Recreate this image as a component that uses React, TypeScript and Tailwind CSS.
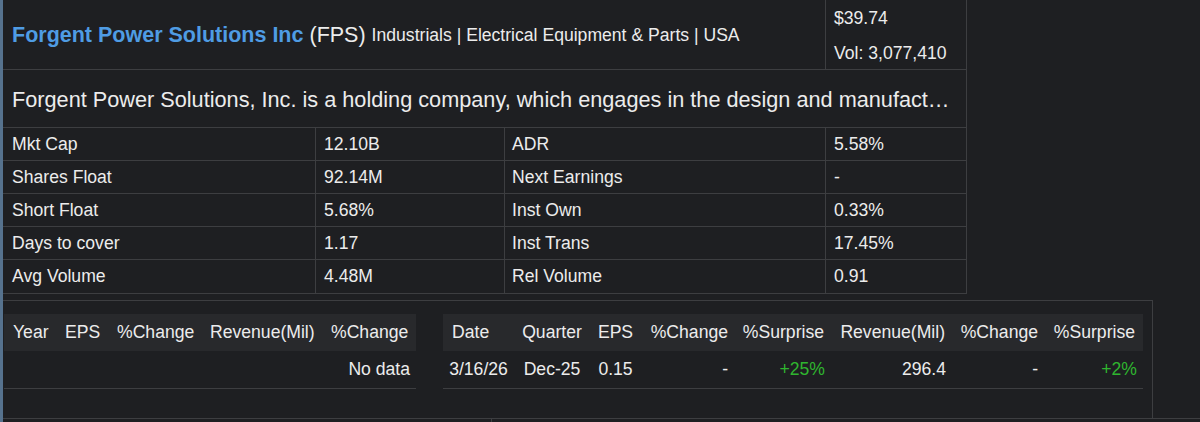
import React from "react";

const rows: [string, string, string, string][] = [
  ["Mkt Cap", "12.10B", "ADR", "5.58%"],
  ["Shares Float", "92.14M", "Next Earnings", "-"],
  ["Short Float", "5.68%", "Inst Own", "0.33%"],
  ["Days to cover", "1.17", "Inst Trans", "17.45%"],
  ["Avg Volume", "4.48M", "Rel Volume", "0.91"],
];

export default function App() {
  return (
    <div className="w-[1200px] h-[422px] overflow-hidden bg-[#1e1f22] text-[#ececec] flex font-['Liberation_Sans',Arial,sans-serif]">
      <div className="w-[3px] shrink-0 bg-[#56728e]" />
      <div className="flex-1 flex flex-col">
        {/* top table */}
        <div className="w-[964px] border-r border-b border-[#3d3e41]">
          <div className="flex h-[70px] border-b border-[#3d3e41]">
            <div className="w-[823px] border-r border-[#3d3e41] flex items-center pl-[9px] pt-[1px] whitespace-nowrap">
              <span className="text-[21.5px] font-bold text-[#4f9ce4]">Forgent Power Solutions Inc</span>
              <span className="text-[21.5px] ml-[6px]">(FPS)</span>
              <span className="text-[17.6px] ml-[6px]">Industrials | Electrical Equipment &amp; Parts | USA</span>
            </div>
            <div className="flex-1 flex flex-col pl-[8px] text-[17.6px]">
              <div className="h-[36px] flex items-center">$39.74</div>
              <div className="h-[34px] flex items-center pt-[2px]">Vol: 3,077,410</div>
            </div>
          </div>
          <div className="h-[58px] border-b border-[#3d3e41] flex items-center pl-[9px] pt-[3px] overflow-hidden">
            <div className="whitespace-nowrap text-[21.7px]">
              Forgent Power Solutions, Inc. is a holding company, which engages in the design and manufact…
            </div>
          </div>
          {rows.map((r, i) => (
            <div
              key={r[0]}
              className={`grid grid-cols-[313px_189px_321px_1fr] h-[33px] text-[17.6px] ${i < rows.length - 1 ? "border-b border-[#3d3e41]" : ""}`}
            >
              <div className="border-r border-[#3d3e41] pl-[9px] flex items-center">{r[0]}</div>
              <div className="border-r border-[#3d3e41] pl-[8px] flex items-center">{r[1]}</div>
              <div className="border-r border-[#3d3e41] pl-[7px] flex items-center">{r[2]}</div>
              <div className="pl-[8px] flex items-center">{r[3]}</div>
            </div>
          ))}
        </div>

        <div className="h-[6px]" />

        {/* bottom container */}
        <div className="w-[1150px] h-[118px] border-t border-r border-[#3d3e41] pt-[13px] flex text-[17.6px]">
          {/* left table */}
          <div className="ml-[1px] w-[412px] flex flex-col">
            <div className="h-[37px] bg-[#28292c] flex items-center">
              <div className="w-[52px] pl-[9px]">Year</div>
              <div className="w-[52px] pl-[9px]">EPS</div>
              <div className="w-[93px] pl-[9px]">%Change</div>
              <div className="w-[122px] pl-[9px]">Revenue(Mil)</div>
              <div className="w-[93px] pl-[8px]">%Change</div>
            </div>
            <div className="h-[38px] border-b border-[#3d3e41] flex items-center justify-end pr-[6px]">No data</div>
          </div>
          <div className="w-[27px]" />
          {/* right table */}
          <div className="w-[700px] flex flex-col">
            <div className="h-[37px] bg-[#28292c] flex items-center">
              <div className="w-[71px] pl-[9px]">Date</div>
              <div className="w-[76px] text-center">Quarter</div>
              <div className="w-[51px] text-center">EPS</div>
              <div className="w-[94px] text-right pr-[7px]">%Change</div>
              <div className="w-[97px] text-right pr-[8px]">%Surprise</div>
              <div className="w-[121px] text-right pr-[8px]">Revenue(Mil)</div>
              <div className="w-[92px] text-right pr-[7px]">%Change</div>
              <div className="w-[98px] text-right pr-[8px]">%Surprise</div>
            </div>
            <div className="h-[38px] border-b border-[#3d3e41] flex items-center">
              <div className="w-[71px] text-center">3/16/26</div>
              <div className="w-[76px] text-center">Dec-25</div>
              <div className="w-[51px] text-center">0.15</div>
              <div className="w-[94px] text-right pr-[7px]">-</div>
              <div className="w-[97px] text-right pr-[7px] text-[#2fb52f]">+25%</div>
              <div className="w-[121px] text-right pr-[7px]">296.4</div>
              <div className="w-[92px] text-right pr-[7px]">-</div>
              <div className="w-[98px] text-right pr-[6px] text-[#2fb52f]">+2%</div>
            </div>
          </div>
        </div>

        {/* bottom strip */}
        <div className="flex-1 border-t border-[#3d3e41] flex">
          <div className="w-[489px] border-r border-[#3d3e41]" />
        </div>
      </div>
    </div>
  );
}
